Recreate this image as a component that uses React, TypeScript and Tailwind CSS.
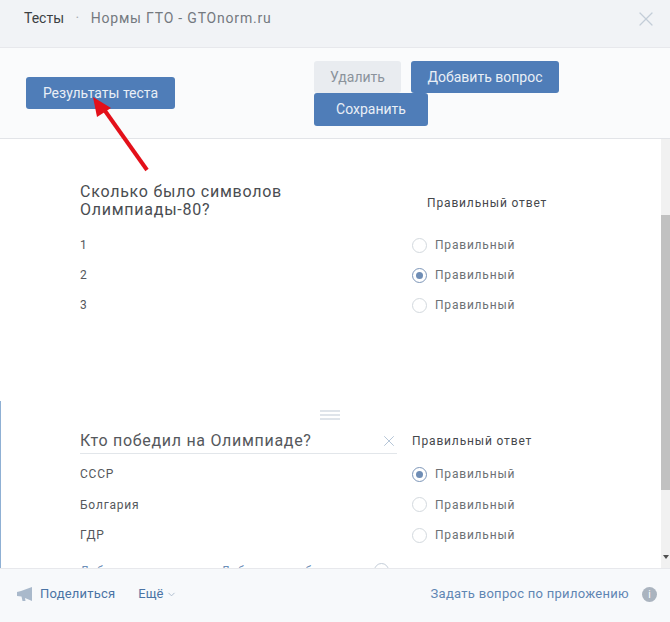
import { ChevronDown, X } from "lucide-react";

const font = "font-['Roboto','Liberation_Sans',sans-serif]";

function Answer({ label, checked, rowH = "h-[30px]" }: { label: string; checked?: boolean; rowH?: string }) {
  return (
    <div className={"flex items-center " + rowH}>
      <span className="w-[332px] text-[12px] tracking-[0.8px] text-[#55585c]">{label}</span>
      <span
        className={
          checked
            ? "w-[15px] h-[15px] rounded-full border border-[#7d96b8] flex items-center justify-center"
            : "w-[15px] h-[15px] rounded-full border border-[#d3d9de]"
        }
      >
        {checked && <span className="w-[7px] h-[7px] rounded-full bg-[#6f8db5]" />}
      </span>
      <span className="ml-[8px] text-[12px] tracking-[0.8px] text-[#6d7175]">Правильный</span>
    </div>
  );
}

function Btn({ label, className }: { label: string; className: string }) {
  return (
    <button className={"h-[32px] rounded-[3px] text-[14px] flex items-center justify-center " + className}>
      {label}
    </button>
  );
}

export default function App() {
  return (
    <div className={"relative w-[670px] h-[622px] flex flex-col overflow-hidden bg-white " + font}>
      <header className="h-[48px] shrink-0 flex items-center pl-[24px] pr-[12px] pb-[10px] bg-[#f1f3f6] border-b border-[#e7e8ec] text-[14px]">
        <span className="text-[#3c3f43]">Тесты</span>
        <span className="mx-[11.5px] text-[#a8adb3]">·</span>
        <span className="text-[#74797f] tracking-[0.8px]">Нормы ГТО - GTOnorm.ru</span>
        <X className="ml-auto w-[24px] h-[24px] text-[#c3cdd8]" strokeWidth={1.2} />
      </header>

      <div className="h-[91px] shrink-0 flex bg-[#fafbfc] border-b border-[#e2e4e8]">
        <div className="w-[314px] pl-[26px] pt-[29px]">
          <Btn label="Результаты теста" className="w-[149px] bg-[#4f7db8] text-[#e9eff6]" />
        </div>
        <div className="w-[250px] pt-[13px] flex flex-wrap content-start">
          <Btn label="Удалить" className="w-[87px] bg-[#e9ecf0] text-[#8b939c]" />
          <Btn label="Добавить вопрос" className="ml-[10px] w-[148px] bg-[#4f7db8] text-[#e9eff6]" />
          <Btn label="Сохранить" className="w-[114px] h-[33px] bg-[#4f7db8] text-[#e9eff6]" />
        </div>
      </div>

      <div className="flex-1 min-h-0 flex">
        <main className="flex-1 min-w-0 overflow-hidden">
          <section className="pl-[80px] pt-[44px] h-[262px]">
            <div className="flex">
              <h2 className="w-[347px] text-[16px] leading-[18px] tracking-[0.75px] text-[#4a4d51] font-normal">
                Сколько было символов<br />Олимпиады-80?
              </h2>
              <span className="pt-[11px] text-[12px] tracking-[0.85px] text-[#45484c]">Правильный ответ</span>
            </div>
            <div className="mt-[11px]">
              <Answer label="1" />
              <Answer label="2" checked />
              <Answer label="3" />
            </div>
          </section>

          <section className="h-[167px] border-l border-[#8fb0d4] pl-[79px] overflow-hidden">
            <div className="ml-[240px] w-[20px] pt-[9px] flex flex-col gap-[2px]">
              <span className="h-[2px] bg-[#dfe4ea]" />
              <span className="h-[2px] bg-[#dfe4ea]" />
              <span className="h-[2px] bg-[#dfe4ea]" />
            </div>
            <div className="flex items-center mt-[6px]">
              <div className="w-[317px] h-[28px] pt-[2px] flex items-center border-b border-[#e2e6ea]">
                <span className="text-[16px] tracking-[0.7px] text-[#55585c]">Кто победил на Олимпиаде?</span>
                <X className="ml-auto -mr-[1px] w-[18px] h-[18px] text-[#b4c4d6]" strokeWidth={1.3} />
              </div>
              <span className="ml-[15px] pt-[2px] text-[12px] tracking-[0.85px] text-[#45484c]">Правильный ответ</span>
            </div>
            <div className="mt-[5px]">
              <Answer label="СССР" checked rowH="h-[30.5px]" />
              <Answer label="Болгария" rowH="h-[30.5px]" />
              <Answer label="ГДР" rowH="h-[30.5px]" />
            </div>
            <div className="flex items-center mt-[11px] text-[12px] tracking-[0.5px] text-[#6d8fb8]">
              <span className="w-[141px]">Добавить вариант</span>
              <span>Добавить изображение</span>
              <span className="ml-[10px] w-[15px] h-[15px] rounded-full border border-[#c3cdd8]" />
            </div>
          </section>
        </main>

        <div className="w-[9px] shrink-0 flex flex-col bg-[#f1f1f1]">
          <div className="h-[76px]" />
          <div className="h-[275px] bg-[#c1c1c1]" />
          <div className="mt-auto mb-[9px] mx-auto w-0 h-0 border-x-[3px] border-t-[4px] border-x-transparent border-t-[#505050]" />
        </div>
      </div>

      <footer className="h-[54px] shrink-0 flex items-center pl-[17px] pr-[13px] pb-[3px] bg-[#f7f9fb] border-t border-[#e7e8ec] text-[13px]">
        <svg className="w-[16px] h-[14px]" viewBox="0 0 16 14">
          <path d="M0 5 L4 4 L15 0 V14 L8 11 L8.5 14 H5.5 L4.5 9.5 L0 9 Z" fill="#a9b9cb" />
        </svg>
        <span className="ml-[7px] tracking-[0.2px] text-[#4a74a5]">Поделиться</span>
        <span className="ml-[23px] text-[#4a74a5]">Ещё</span>
        <ChevronDown className="ml-[3px] w-[11px] h-[11px] text-[#a9b9cb]" />
        <span className="ml-auto text-[#5f86b3] tracking-[0.28px]">Задать вопрос по приложению</span>
        <span className="ml-[13px] w-[15px] h-[15px] rounded-full bg-[#aab4bf] flex items-center justify-center text-[10px] text-white">i</span>
      </footer>

      <svg className="absolute left-[86px] top-[92px] w-[66px] h-[84px]" viewBox="0 0 66 84">
        <path d="M61 78 L17 16" stroke="#e3101a" strokeWidth="4" fill="none" />
        <path d="M7 5 L25 16 L11 25 Z" fill="#e3101a" />
      </svg>
    </div>
  );
}
